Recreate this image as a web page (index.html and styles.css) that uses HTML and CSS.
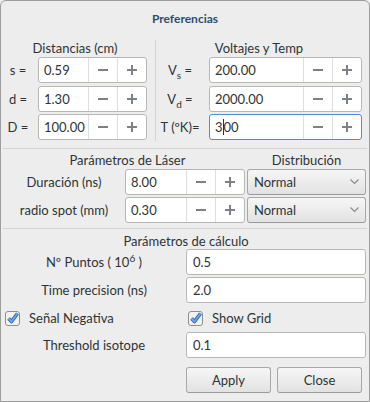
FILE: index.html
```html
<!DOCTYPE html>
<html lang="es">
<head>
    <meta charset="UTF-8">
    <title>Preferencias</title>
    <link rel="stylesheet" href="styles.css">
</head>
<body>
    <div class="window">
        <div class="titlebar">Preferencias</div>

        <div class="top">
            <div class="col col-left">
                <div class="head">Distancias (cm)</div>
                <div class="row">
                    <span class="lbl">s =</span>
                    <div class="spin">
                        <span class="entry">0.59</span>
                        <span class="sbtn"><svg width="10" height="10"><rect x="0" y="4" width="10" height="2"/></svg></span>
                        <span class="sbtn"><svg width="10" height="10"><rect x="0" y="4" width="10" height="2"/><rect x="4" y="0" width="2" height="10"/></svg></span>
                    </div>
                </div>
                <div class="row">
                    <span class="lbl">d =</span>
                    <div class="spin">
                        <span class="entry">1.30</span>
                        <span class="sbtn"><svg width="10" height="10"><rect x="0" y="4" width="10" height="2"/></svg></span>
                        <span class="sbtn"><svg width="10" height="10"><rect x="0" y="4" width="10" height="2"/><rect x="4" y="0" width="2" height="10"/></svg></span>
                    </div>
                </div>
                <div class="row">
                    <span class="lbl">D =</span>
                    <div class="spin">
                        <span class="entry">100.00</span>
                        <span class="sbtn"><svg width="10" height="10"><rect x="0" y="4" width="10" height="2"/></svg></span>
                        <span class="sbtn"><svg width="10" height="10"><rect x="0" y="4" width="10" height="2"/><rect x="4" y="0" width="2" height="10"/></svg></span>
                    </div>
                </div>
            </div>

            <div class="vsep"></div>

            <div class="col col-right">
                <div class="head">Voltajes y Temp</div>
                <div class="row">
                    <span class="lbl">V<sub>s</sub> =</span>
                    <div class="spin">
                        <span class="entry">200.00</span>
                        <span class="sbtn"><svg width="10" height="10"><rect x="0" y="4" width="10" height="2"/></svg></span>
                        <span class="sbtn"><svg width="10" height="10"><rect x="0" y="4" width="10" height="2"/><rect x="4" y="0" width="2" height="10"/></svg></span>
                    </div>
                </div>
                <div class="row">
                    <span class="lbl">V<sub>d</sub> =</span>
                    <div class="spin">
                        <span class="entry">2000.00</span>
                        <span class="sbtn"><svg width="10" height="10"><rect x="0" y="4" width="10" height="2"/></svg></span>
                        <span class="sbtn"><svg width="10" height="10"><rect x="0" y="4" width="10" height="2"/><rect x="4" y="0" width="2" height="10"/></svg></span>
                    </div>
                </div>
                <div class="row">
                    <span class="lbl">T (ºK)=</span>
                    <div class="spin focus">
                        <span class="entry">3<span class="caret"></span>00</span>
                        <span class="sbtn"><svg width="10" height="10"><rect x="0" y="4" width="10" height="2"/></svg></span>
                        <span class="sbtn"><svg width="10" height="10"><rect x="0" y="4" width="10" height="2"/><rect x="4" y="0" width="2" height="10"/></svg></span>
                    </div>
                </div>
            </div>
        </div>

        <div class="hsep sep1"></div>

        <div class="laser">
            <div class="laser-head">
                <span class="head laser-title">Parámetros de Láser</span>
                <span class="head dist-title">Distribución</span>
            </div>
            <div class="lrow">
                <span class="llbl">Duración (ns)</span>
                <div class="spin lspin">
                    <span class="entry">8.00</span>
                    <span class="sbtn"><svg width="10" height="10"><rect x="0" y="4" width="10" height="2"/></svg></span>
                    <span class="sbtn"><svg width="10" height="10"><rect x="0" y="4" width="10" height="2"/><rect x="4" y="0" width="2" height="10"/></svg></span>
                </div>
                <div class="combo">Normal<svg width="9" height="6"><polyline points="0.5,0.5 4.5,4.5 8.5,0.5"/></svg></div>
            </div>
            <div class="lrow">
                <span class="llbl">radio spot (mm)</span>
                <div class="spin lspin">
                    <span class="entry">0.30</span>
                    <span class="sbtn"><svg width="10" height="10"><rect x="0" y="4" width="10" height="2"/></svg></span>
                    <span class="sbtn"><svg width="10" height="10"><rect x="0" y="4" width="10" height="2"/><rect x="4" y="0" width="2" height="10"/></svg></span>
                </div>
                <div class="combo">Normal<svg width="9" height="6"><polyline points="0.5,0.5 4.5,4.5 8.5,0.5"/></svg></div>
            </div>
        </div>

        <div class="hsep sep2"></div>

        <div class="calc">
            <div class="head calc-title">Parámetros de cálculo</div>
            <div class="crow">
                <span class="clbl">Nº Puntos ( 10<sup>6</sup> )</span>
                <span class="field">0.5</span>
            </div>
            <div class="crow gap2">
                <span class="clbl">Time precision (ns)</span>
                <span class="field">2.0</span>
            </div>
            <div class="crow gap2">
                <label class="check">
                    <svg width="15" height="15">
                        <rect class="box" x="0.5" y="0.5" width="14" height="14" rx="2.5"/>
                        <path class="tick-o" d="M3.5 7.5 L6.5 10.5 L12.5 2.5"/>
                        <path class="tick" d="M3.5 7.5 L6.5 10.5 L12.5 2.5"/>
                    </svg>
                    Señal Negativa
                </label>
                <label class="check">
                    <svg width="15" height="15">
                        <rect class="box" x="0.5" y="0.5" width="14" height="14" rx="2.5"/>
                        <path class="tick-o" d="M3.5 7.5 L6.5 10.5 L12.5 2.5"/>
                        <path class="tick" d="M3.5 7.5 L6.5 10.5 L12.5 2.5"/>
                    </svg>
                    Show Grid
                </label>
            </div>
            <div class="crow gap1">
                <span class="clbl">Threshold isotope</span>
                <span class="field">0.1</span>
            </div>
            <div class="actions">
                <button class="btn">Apply</button>
                <button class="btn">Close</button>
            </div>
        </div>
    </div>
</body>
</html>
```

FILE: styles.css
```css
body {
    margin: 0;
    font-family: Lato, "Noto Sans", sans-serif;
    font-size: 13px;
    color: #2e3436;
    background: #ededed;
}
.window {
    width: 370px;
    height: 402px;
    box-sizing: border-box;
    border: 1px solid #9d9d9d;
    border-radius: 6px 6px 0 0;
    background: #ededed;
}
.titlebar {
    height: 34px;
    display: flex;
    align-items: center;
    justify-content: center;
    font-size: 12px;
    font-weight: bold;
    color: #304d6d;
}
.head {
    height: 16px;
    line-height: 16px;
    text-align: center;
}

/* top: distances and voltages */
.top {
    display: flex;
    padding: 5px 0 0 2px;
}
.col {
    display: flex;
    flex-direction: column;
    gap: 2.5px;
}
.col .head {
    margin-bottom: -1.5px;
}
.col-left {
    width: 144px;
}
.col-right {
    width: 206px;
}
.vsep {
    width: 1px;
    margin: 0 0 -1px 8px;
    background: #d3d3d3;
}
.row {
    display: flex;
    align-items: center;
    gap: 5px;
    height: 26px;
}
.lbl {
    text-align: center;
    line-height: 16px;
}
.col-left .lbl {
    width: 30px;
}
.col-right .lbl {
    width: 48px;
}
sub {
    font-size: 10px;
    line-height: 0;
    vertical-align: -4px;
}
sup {
    font-size: 10px;
    line-height: 0;
    vertical-align: 5px;
}

/* spin button */
.spin {
    flex: 1;
    display: flex;
    height: 26px;
    box-sizing: border-box;
    border: 1px solid #b8b8b3;
    border-radius: 3px;
    background: #fff;
}
.spin.focus {
    border-color: #4a90d9;
}
.entry {
    flex: 1;
    display: flex;
    align-items: center;
    padding-left: 5px;
    color: #2e3436;
}
.caret {
    display: inline-block;
    width: 1px;
    height: 16px;
    background: #2e3436;
}
.sbtn {
    width: 28px;
    display: flex;
    align-items: center;
    justify-content: center;
    border-left: 1px solid #dedede;
}
.sbtn:last-child {
    width: 28px;
}
.sbtn svg {
    fill: #7e8087;
}

.hsep {
    height: 1px;
    margin-left: 2px;
    margin-right: 2px;
    background: #d3d3d3;
}
.sep1 {
    margin-top: 8px;
}
.sep2 {
    margin-top: 5px;
}

/* laser */
.laser {
    padding: 3px 0 0 7px;
}
.laser-head {
    display: flex;
    margin-bottom: 1px;
}
.laser-title {
    width: 239px;
}
.dist-title {
    width: 119px;
}
.lrow {
    display: flex;
    align-items: center;
    height: 26px;
    margin-bottom: 2px;
}
.llbl {
    width: 112px;
    text-align: center;
    margin-right: 5px;
}
.lspin {
    flex: none;
    width: 120px;
    margin-right: 2px;
}
.combo {
    width: 119px;
    height: 26px;
    box-sizing: border-box;
    display: flex;
    align-items: center;
    justify-content: space-between;
    padding: 0 6px 0 6px;
    border: 1px solid #a8a8a8;
    border-bottom-color: #9a9a9a;
    border-radius: 3px;
    background: linear-gradient(#f6f6f6, #e2e2e2);
}
.combo svg {
    fill: none;
    stroke: #8b8b8b;
    stroke-width: 1.2;
}

/* calc */
.calc {
    padding: 4px 2px 0 2px;
}
.calc-title {
    padding-left: 2px;
}
.crow {
    display: grid;
    grid-template-columns: 182px 180px;
    column-gap: 1px;
    height: 26px;
    align-items: center;
}
.gap2 {
    margin-top: 2px;
}
.gap1 {
    margin-top: 1px;
}
.clbl {
    text-align: center;
}
.field {
    height: 26px;
    box-sizing: border-box;
    border: 1px solid #b8b8b3;
    border-radius: 3px;
    background: #fff;
    display: flex;
    align-items: center;
    padding-left: 6px;
}
.check {
    display: flex;
    align-items: center;
    gap: 9px;
    padding-left: 2px;
}
.check svg .box {
    fill: #f2f2f2;
    stroke: #8f8f8f;
}
.check svg .tick-o {
    fill: none;
    stroke: #2a65b0;
    stroke-width: 3.6;
    stroke-linejoin: round;
}
.check svg .tick {
    fill: none;
    stroke: #6fa6e6;
    stroke-width: 1.8;
    stroke-linejoin: round;
}
.actions {
    display: flex;
    gap: 6px;
    margin: 9px 0 0 183px;
}
.btn {
    width: 85px;
    height: 26px;
    font-family: Lato, "Noto Sans", sans-serif;
    font-size: 13px;
    color: #2e3436;
    border: 1px solid #a8a8a8;
    border-bottom-color: #9a9a9a;
    border-radius: 3px;
    background: linear-gradient(#f6f6f6, #e2e2e2);
}
```
